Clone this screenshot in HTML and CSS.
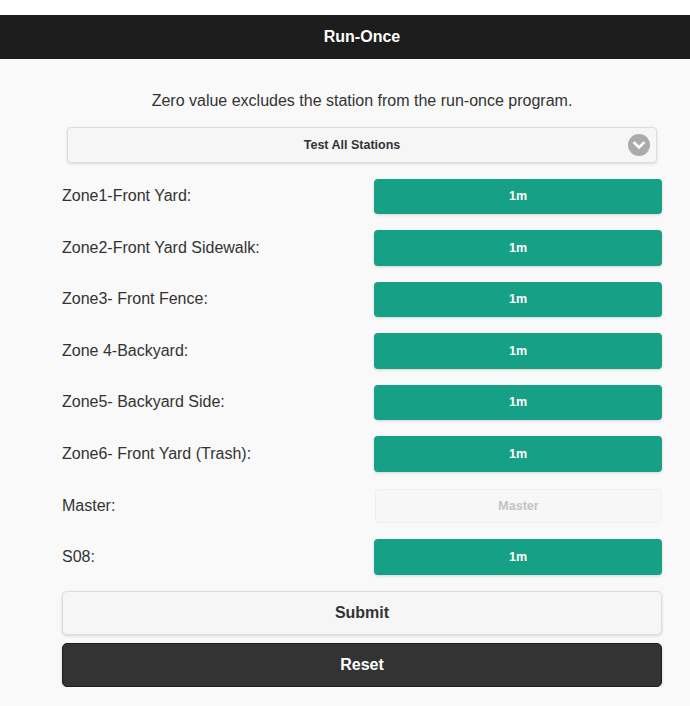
FILE: index.html
```html
<!DOCTYPE html>
<html>
<head>
<meta charset="utf-8">
<link rel="stylesheet" href="styles.css">
</head>
<body>
<div class="topstrip"></div>
<header class="hdr"><h1 class="title">Run-Once</h1></header>
<main class="page">
  <div class="content">
    <p class="note">Zero value excludes the station from the run-once program.</p>
    <div class="select">
      <span class="select-text">Test All Stations</span>
      <span class="chev"><svg width="22" height="22" viewBox="0 0 22 22"><circle cx="11" cy="11" r="11" fill="#ababab"/><path d="M6.5 9 L11 13.5 L15.5 9" fill="none" stroke="#fff" stroke-width="2.6" stroke-linecap="square"/></svg></span>
    </div>
    <div class="rows">
      <div class="row"><label class="lbl">Zone1-Front Yard:</label><button class="dur">1m</button></div>
      <div class="row"><label class="lbl">Zone2-Front Yard Sidewalk:</label><button class="dur">1m</button></div>
      <div class="row"><label class="lbl">Zone3- Front Fence:</label><button class="dur">1m</button></div>
      <div class="row"><label class="lbl">Zone 4-Backyard:</label><button class="dur">1m</button></div>
      <div class="row"><label class="lbl">Zone5- Backyard Side:</label><button class="dur">1m</button></div>
      <div class="row"><label class="lbl">Zone6- Front Yard (Trash):</label><button class="dur">1m</button></div>
      <div class="row"><label class="lbl">Master:</label><button class="dur dis">Master</button></div>
      <div class="row"><label class="lbl">S08:</label><button class="dur">1m</button></div>
    </div>
    <button class="btn submit">Submit</button>
    <button class="btn reset">Reset</button>
  </div>
</main>
</body>
</html>
```
FILE: styles.css
```css
html, body {
  margin: 0;
  padding: 0;
  background: #f9f9f9;
  font-family: "Liberation Sans", Arial, sans-serif;
  color: #333;
}
.topstrip {
  height: 15px;
  background: #fff;
}
.hdr {
  height: 44px;
  background: #1d1d1d;
  display: flex;
  align-items: center;
  justify-content: center;
  padding-left: 34px;
}
.title {
  margin: 0;
  font-size: 16px;
  font-weight: bold;
  color: #fff;
}
.page {
  padding-left: 62px;
}
.content {
  width: 600px;
  display: flex;
  flex-direction: column;
}
.note {
  margin: 33px 0 0 0;
  text-align: center;
  font-size: 16px;
  line-height: 18px;
}
.select {
  margin: 17px 5px 0 5px;
  height: 34px;
  border: 1px solid #dcdcdc;
  border-radius: 4px;
  background: #f6f6f6;
  box-shadow: 0 1px 3px rgba(0,0,0,0.12);
  display: flex;
  align-items: center;
  justify-content: center;
  padding-right: 20px;
  position: relative;
}
.select-text {
  font-size: 12.5px;
  font-weight: bold;
  color: #333;
}
.chev {
  position: absolute;
  right: 6px;
  top: 6px;
  width: 22px;
  height: 22px;
}
.rows {
  margin-top: 15.5px;
  display: flex;
  flex-direction: column;
  gap: 16.05px;
}
.row {
  display: grid;
  grid-template-columns: 312px 288px;
  align-items: center;
  min-height: 35.5px;
}
.lbl {
  font-size: 16px;
  color: #333;
}
.dur {
  height: 35.5px;
  border: none;
  border-radius: 4px;
  background: #16a085;
  color: #fff;
  font-family: "Liberation Sans", Arial, sans-serif;
  font-size: 12.5px;
  font-weight: bold;
  box-shadow: 0 1px 3px rgba(0,0,0,0.15);
  padding: 0;
}
.dur.dis {
  background: #f7f7f7;
  color: #c4c4c4;
  border: 1px solid #efefef;
  box-shadow: none;
  margin-left: 1px;
  width: 287px;
  height: 34px;
}
.btn {
  height: 44px;
  border-radius: 5px;
  font-family: "Liberation Sans", Arial, sans-serif;
  font-size: 16px;
  font-weight: bold;
  padding: 0;
  box-shadow: 0 1px 3px rgba(0,0,0,0.15);
}
.submit {
  margin-top: 16px;
  background: #f6f6f6;
  border: 1px solid #dddddd;
  color: #333;
}
.reset {
  margin-top: 8px;
  background: #333;
  border: 1px solid #1f1f1f;
  color: #fff;
}
```
